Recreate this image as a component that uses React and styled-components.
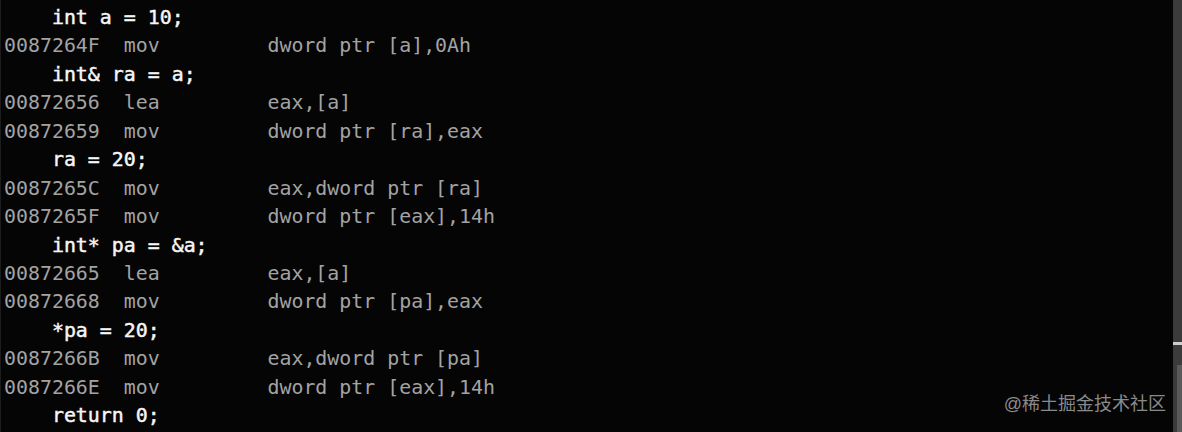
import React from "react";
import styled, { createGlobalStyle } from "styled-components";

const Global = createGlobalStyle`
  html, body {
    margin: 0;
    padding: 0;
    background: #050505;
  }
`;

const Window = styled.div`
  width: 1182px;
  height: 432px;
  display: flex;
  background: #050505;
  position: relative;
  overflow: hidden;
  border-left: 1px solid #1c1c1c;
  box-sizing: border-box;
`;

const Code = styled.div`
  flex: 1;
  padding: 4px 0 0 3px;
  font-family: "DejaVu Sans Mono", "Liberation Mono", monospace;
  font-size: 19.9px;
  line-height: 28.43px;
  white-space: pre;
`;

const Line = styled.div`
  color: ${(p) => (p.src ? "#f6f6f6" : "#a3a3a3")};
  -webkit-text-stroke: ${(p) => (p.src ? "0.45px #f6f6f6" : "0")};
`;

const Scrollbar = styled.div`
  width: 9px;
  display: flex;
  flex-direction: column;
  background: #3b3b3b;
`;

const Track = styled.div`
  height: ${(p) => p.h}px;
  background: #3b3b3b;
`;

const Edge = styled.div`
  height: 3px;
  background: #cfcfcf;
`;

const Thumb = styled.div`
  flex: 1;
  margin-top: 20px;
  background: linear-gradient(to right, #3b3b3b 40%, #5a5a5a 40%);
`;

const Watermark = styled.div`
  position: absolute;
  right: 16px;
  bottom: 17px;
  font-family: "Liberation Sans", "Noto Sans CJK SC", sans-serif;
  font-size: 18px;
  color: #8a8a8a;
`;

const lines = [
  [true, "    int a = 10;"],
  [false, "0087264F  mov         dword ptr [a],0Ah"],
  [true, "    int& ra = a;"],
  [false, "00872656  lea         eax,[a]"],
  [false, "00872659  mov         dword ptr [ra],eax"],
  [true, "    ra = 20;"],
  [false, "0087265C  mov         eax,dword ptr [ra]"],
  [false, "0087265F  mov         dword ptr [eax],14h"],
  [true, "    int* pa = &a;"],
  [false, "00872665  lea         eax,[a]"],
  [false, "00872668  mov         dword ptr [pa],eax"],
  [true, "    *pa = 20;"],
  [false, "0087266B  mov         eax,dword ptr [pa]"],
  [false, "0087266E  mov         dword ptr [eax],14h"],
  [true, "    return 0;"],
];

const App = () => {
  return (
    <>
      <Global />
      <Window>
        <Code>
          {lines.map(([src, text], i) => (
            <Line key={i} src={src}>
              {text}
            </Line>
          ))}
        </Code>
        <Scrollbar>
          <Track h={342} />
          <Edge />
          <Thumb />
        </Scrollbar>
        <Watermark>@稀土掘金技术社区</Watermark>
      </Window>
    </>
  );
};

export default App;
